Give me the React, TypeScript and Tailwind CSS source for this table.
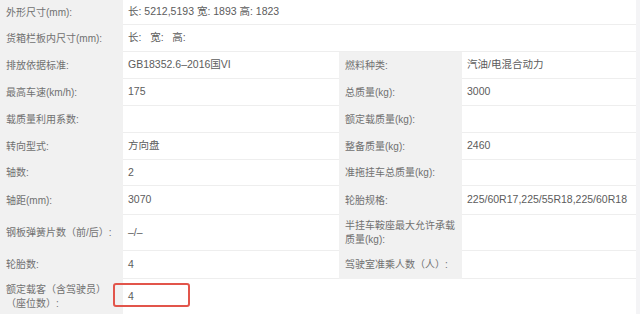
import React from "react";

type Row = {
  l: string;
  v?: string;
  rl?: string;
  rv?: string;
  h: string;
  full?: boolean;
  mark?: boolean;
};

const rows: Row[] = [
  { l: "外形尺寸(mm):", v: "长: 5212,5193 宽: 1893 高: 1823", h: "h-[25px]", full: true },
  { l: "货箱栏板内尺寸(mm):", v: "长:\u00a0\u00a0\u00a0宽:\u00a0\u00a0\u00a0高:", h: "h-[27px]", full: true },
  { l: "排放依据标准:", v: "GB18352.6–2016国VI", rl: "燃料种类:", rv: "汽油/电混合动力", h: "h-[27px]" },
  { l: "最高车速(km/h):", v: "175", rl: "总质量(kg):", rv: "3000", h: "h-[27px]" },
  { l: "载质量利用系数:", v: "", rl: "额定载质量(kg):", rv: "", h: "h-[27px]" },
  { l: "转向型式:", v: "方向盘", rl: "整备质量(kg):", rv: "2460", h: "h-[27px]" },
  { l: "轴数:", v: "2", rl: "准拖挂车总质量(kg):", rv: "", h: "h-[26px]" },
  { l: "轴距(mm):", v: "3070", rl: "轮胎规格:", rv: "225/60R17,225/55R18,225/60R18", h: "h-[29px]" },
  { l: "钢板弹簧片数（前/后）:", v: "–/–", rl: "半挂车鞍座最大允许承载质量(kg):", rv: "", h: "h-[36px]" },
  { l: "轮胎数:", v: "4", rl: "驾驶室准乘人数（人）:", rv: "", h: "h-[28px]" },
  { l: "额定载客（含驾驶员）（座位数）:", v: "4", h: "h-[36px]", full: true, mark: true },
];

function Label({ text }: { text: string }) {
  return (
    <div className="bg-[#f1f1f1] flex items-center pl-[6px] pr-[4px] text-[10px] leading-[14px] text-[#707070]">
      {text}
    </div>
  );
}

function Value({ text, mark }: { text?: string; mark?: boolean }) {
  return (
    <div className="relative bg-white border-b border-[#eeeeee] flex items-center pl-[5px] text-[10.5px] text-[#5c5c5c]">
      {text}
      {/* red annotation box */}
      {mark && (
        <div className="absolute left-[-10px] top-[4px] w-[77px] h-[24px] border-2 border-[#e2554b] rounded-[3px]" />
      )}
    </div>
  );
}

export default function App() {
  return (
    <div
      className="w-[640px] h-[314px] overflow-hidden bg-[#f4f4f6]"
      style={{ fontFamily: '"Liberation Sans", "Noto Sans CJK SC", sans-serif' }}
    >
      <div className="w-[636px] grid grid-cols-[123px_216px_123px_174px]">
        {rows.map((r, i) =>
          r.full ? (
            <React.Fragment key={i}>
              <div className={`${r.h} grid`}>
                <Label text={r.l} />
              </div>
              <div className={`${r.h} col-span-3 grid`}>
                <Value text={r.v} mark={r.mark} />
              </div>
            </React.Fragment>
          ) : (
            <React.Fragment key={i}>
              <div className={`${r.h} grid`}>
                <Label text={r.l} />
              </div>
              <div className={`${r.h} grid`}>
                <Value text={r.v} />
              </div>
              <div className={`${r.h} grid`}>
                <Label text={r.rl || ""} />
              </div>
              <div className={`${r.h} grid`}>
                <Value text={r.rv} />
              </div>
            </React.Fragment>
          )
        )}
      </div>
    </div>
  );
}
